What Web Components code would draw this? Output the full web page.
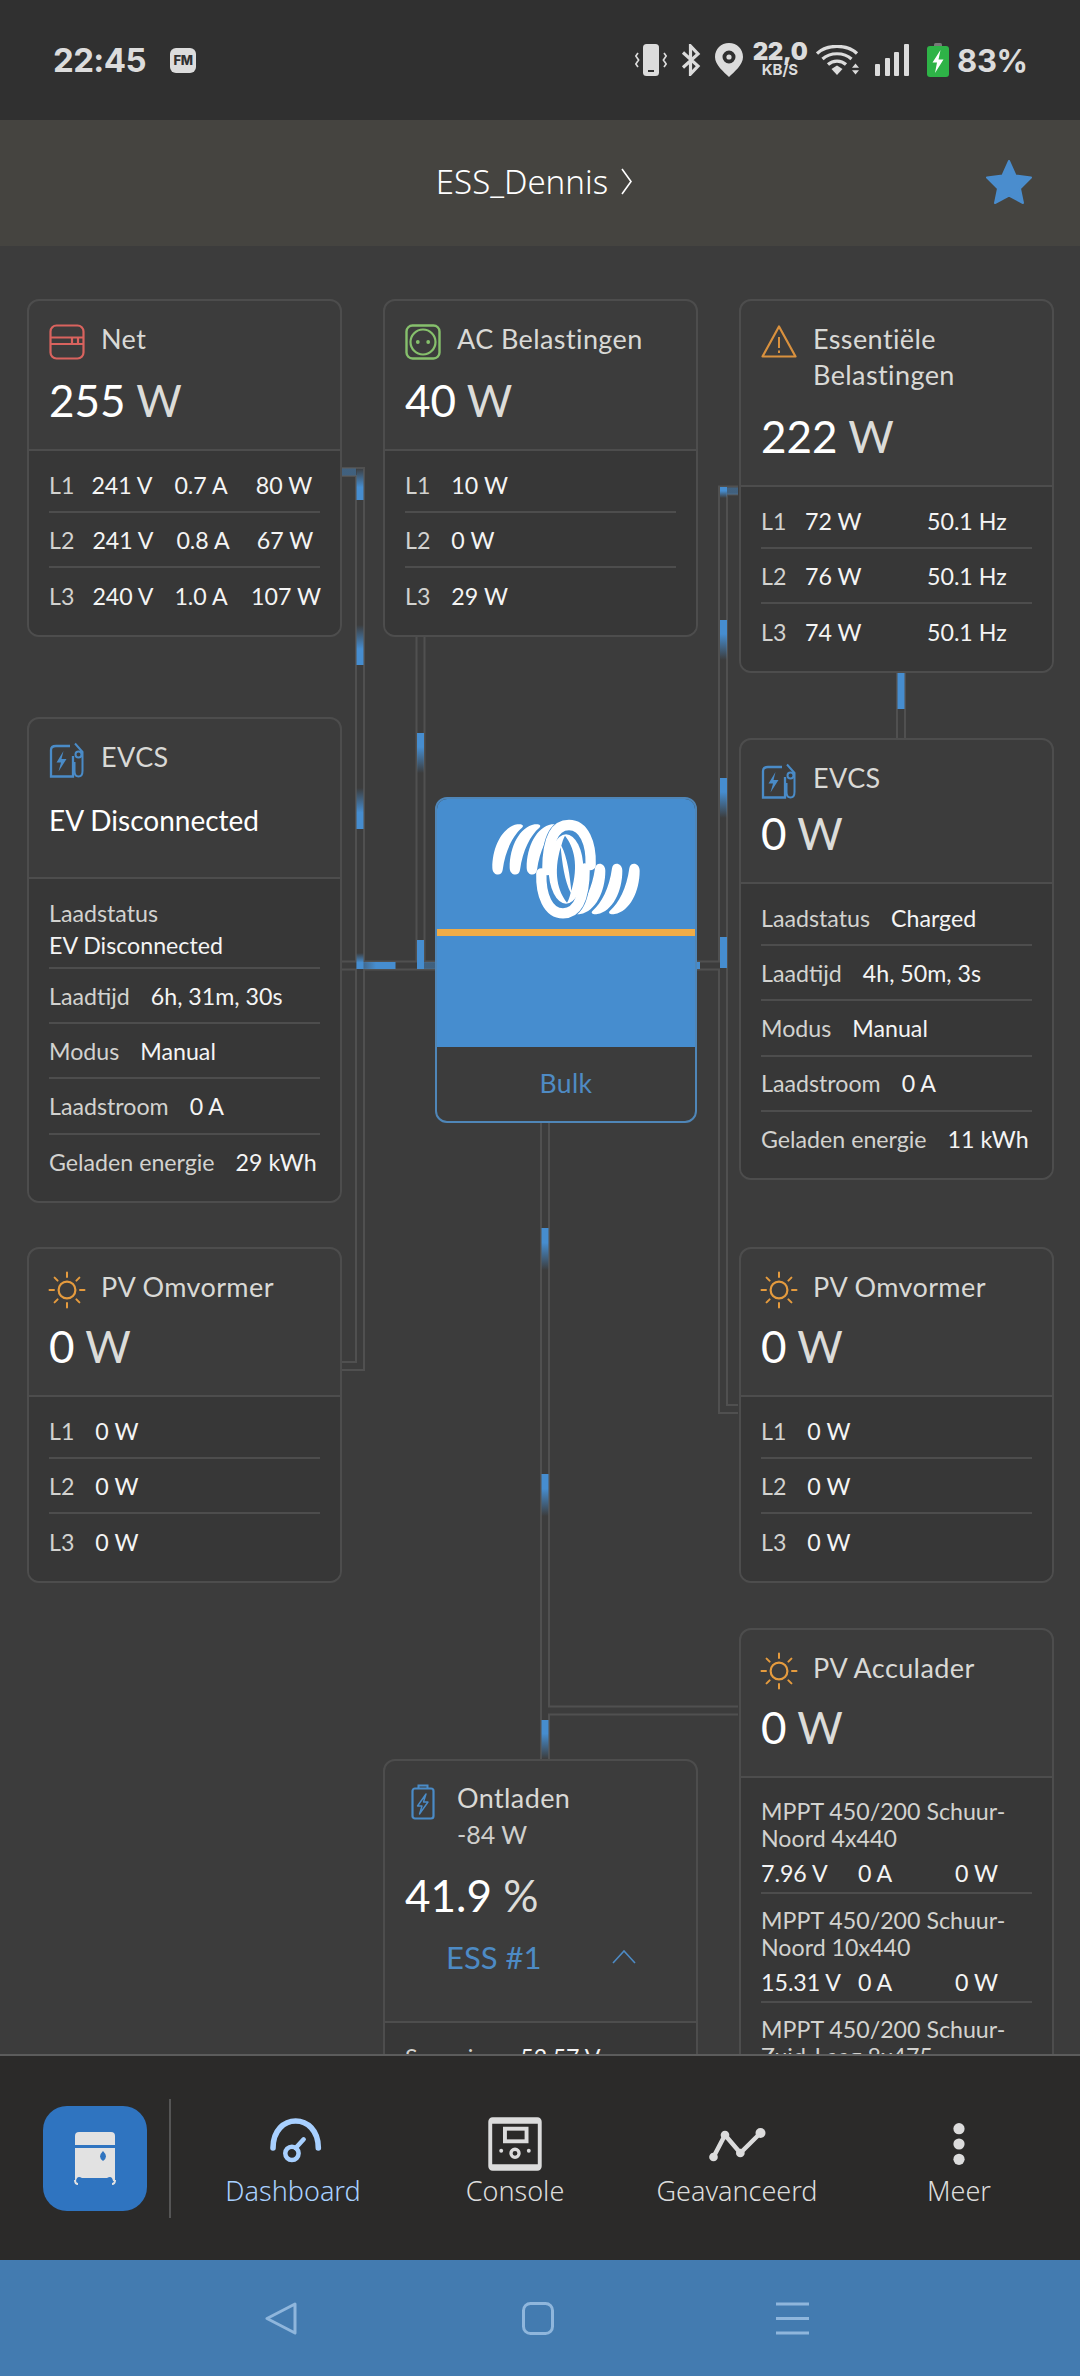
<!DOCTYPE html>
<html lang="nl">
<head>
<meta charset="utf-8">
<title>VRM Dashboard</title>
<style>
  html, body { margin: 0; padding: 0; background: #3c3c3c; }
  body { width: 1080px; height: 2376px; overflow: hidden; font-family: Lato, "Noto Sans", sans-serif; }
  vrm-app { display: flex; }
</style>
</head>
<body>
<vrm-app>
  <status-bar slot="status"></status-bar>
  <site-header slot="header" name="ESS_Dennis"></site-header>

  <flow-diagram slot="main">
    <device-card style="--x:27px;--y:299px;--gap:12px" value="255" unit="W">
      <vic-icon slot="icon" name="grid" color="#d9635e"></vic-icon>
      <span slot="title">Net</span>
      <card-row label="L1" style="--cols:38px 70px 88px 78px"><span>241 V</span><span>0.7 A</span><span>80 W</span></card-row>
      <card-row label="L2" style="--cols:38px 72px 88px 76px"><span>241 V</span><span>0.8 A</span><span>67 W</span></card-row>
      <card-row label="L3" style="--cols:38px 72px 84px 86px"><span>240 V</span><span>1.0 A</span><span>107 W</span></card-row>
    </device-card>

    <device-card style="--x:383px;--y:299px;--gap:12px" value="40" unit="W">
      <vic-icon slot="icon" name="socket" color="#86c06c"></vic-icon>
      <span slot="title">AC Belastingen</span>
      <card-row label="L1"><span>10 W</span></card-row>
      <card-row label="L2"><span>0 W</span></card-row>
      <card-row label="L3"><span>29 W</span></card-row>
    </device-card>

    <device-card style="--x:739px;--y:299px;--gap:12px" value="222" unit="W">
      <vic-icon slot="icon" name="warning" color="#d9913e"></vic-icon>
      <span slot="title">Essentiële<br>Belastingen</span>
      <card-row label="L1" style="--cols:44px 122px 1fr;--ji:start"><span>72 W</span><span>50.1 Hz</span></card-row>
      <card-row label="L2" style="--cols:44px 122px 1fr;--ji:start"><span>76 W</span><span>50.1 Hz</span></card-row>
      <card-row label="L3" style="--cols:44px 122px 1fr;--ji:start"><span>74 W</span><span>50.1 Hz</span></card-row>
    </device-card>

    <device-card style="--x:27px;--y:717px;--gap:24px" text="EV Disconnected">
      <vic-icon slot="icon" name="evcs" color="#4a8bc7"></vic-icon>
      <span slot="title">EVCS</span>
      <card-row stacked label="Laadstatus"><span>EV Disconnected</span></card-row>
      <card-row label="Laadtijd"><span>6h, 31m, 30s</span></card-row>
      <card-row label="Modus"><span>Manual</span></card-row>
      <card-row label="Laadstroom"><span>0 A</span></card-row>
      <card-row label="Geladen energie"><span>29 kWh</span></card-row>
    </device-card>

    <device-card style="--x:739px;--y:738px;--gap:6px" value="0" unit="W">
      <vic-icon slot="icon" name="evcs" color="#4a8bc7"></vic-icon>
      <span slot="title">EVCS</span>
      <card-row label="Laadstatus"><span>Charged</span></card-row>
      <card-row label="Laadtijd"><span>4h, 50m, 3s</span></card-row>
      <card-row label="Modus"><span>Manual</span></card-row>
      <card-row label="Laadstroom"><span>0 A</span></card-row>
      <card-row label="Geladen energie"><span>11 kWh</span></card-row>
    </device-card>

    <device-card style="--x:27px;--y:1247px;--gap:10px" value="0" unit="W">
      <vic-icon slot="icon" name="sun" color="#e59b3e"></vic-icon>
      <span slot="title">PV Omvormer</span>
      <card-row label="L1"><span>0 W</span></card-row>
      <card-row label="L2"><span>0 W</span></card-row>
      <card-row label="L3"><span>0 W</span></card-row>
    </device-card>

    <device-card style="--x:739px;--y:1247px;--gap:10px" value="0" unit="W">
      <vic-icon slot="icon" name="sun" color="#e59b3e"></vic-icon>
      <span slot="title">PV Omvormer</span>
      <card-row label="L1"><span>0 W</span></card-row>
      <card-row label="L2"><span>0 W</span></card-row>
      <card-row label="L3"><span>0 W</span></card-row>
    </device-card>

    <device-card style="--x:739px;--y:1628px;--gap:10px" value="0" unit="W">
      <vic-icon slot="icon" name="sun" color="#e59b3e"></vic-icon>
      <span slot="title">PV Acculader</span>
      <mppt-row name="MPPT 450/200 Schuur-Noord 4x440" volts="7.96 V" amps="0 A" watts="0 W"></mppt-row>
      <mppt-row name="MPPT 450/200 Schuur-Noord 10x440" volts="15.31 V" amps="0 A" watts="0 W"></mppt-row>
      <mppt-row name="MPPT 450/200 Schuur-Zuid-Laag 8x475" volts="21.06 V" amps="0 A" watts="0 W"></mppt-row>
    </device-card>

    <battery-card style="--x:383px;--y:1759px"></battery-card>

    <inverter-card state="Bulk"></inverter-card>
  </flow-diagram>

  <bottom-nav slot="nav">
    <nav-item label="Dashboard" active><vic-icon name="gauge" size="48" color="#a8d0ff"></vic-icon></nav-item>
    <nav-item label="Console"><vic-icon name="console" size="54" color="#dcdcdc"></vic-icon></nav-item>
    <nav-item label="Geavanceerd"><vic-icon name="chart" size="60" color="#dcdcdc"></vic-icon></nav-item>
    <nav-item label="Meer"><vic-icon name="dots" size="48" color="#dcdcdc"></vic-icon></nav-item>
  </bottom-nav>

  <android-bar slot="android"></android-bar>
</vrm-app>

<script>
// Icons used in the cards and the bottom navigation, all drawn on a 36x36 box
const ICONS = {
  grid: `<rect x="1.5" y="1.5" width="33" height="33" rx="6" fill="none" stroke="currentColor" stroke-width="2.2"/>
         <path d="M1.5 13.5H34.5M1.5 20H34.5M23 13.5V20M29 13.5V20" fill="none" stroke="currentColor" stroke-width="2.2"/>`,
  socket: `<rect x="1.5" y="1.5" width="33" height="33" rx="6" fill="none" stroke="currentColor" stroke-width="2.4"/>
           <circle cx="18" cy="18" r="12.5" fill="none" stroke="currentColor" stroke-width="2.2"/>
           <circle cx="12.8" cy="18" r="1.9" fill="currentColor"/><circle cx="23.2" cy="18" r="1.9" fill="currentColor"/>`,
  warning: `<path d="M18 2.5 34.5 32.5H1.5Z" fill="none" stroke="currentColor" stroke-width="2.2" stroke-linejoin="round"/>
            <path d="M18 13V24M18 26.5V29" fill="none" stroke="currentColor" stroke-width="2"/>`,
  evcs: `<path d="M21 4H7Q2 4 2 8V34.5H24V14" fill="none" stroke="currentColor" stroke-width="2.3"/>
         <path d="M14.5 9 7.5 20.5H12L9.5 29.5 17.5 17H12.5Z" fill="currentColor"/>
         <path d="M26 1.5 33.5 10V29Q33.5 34.5 29.5 34.5T25.5 29V20" fill="none" stroke="currentColor" stroke-width="2"/>
         <circle cx="29.5" cy="12.5" r="3" fill="none" stroke="currentColor" stroke-width="2"/>`,
  sun: `<circle cx="18" cy="18" r="8.4" fill="none" stroke="currentColor" stroke-width="2.2"/>
        <path d="M18 0.5V5M18 31V35.5M0.5 18H5M31 18H35.5M5.6 5.6 8.6 8.6M27.4 27.4 30.4 30.4M30.4 5.6 27.4 8.6M8.6 27.4 5.6 30.4" fill="none" stroke="currentColor" stroke-width="2" stroke-linecap="round"/>`,
  battery: `<rect x="7.5" y="4.5" width="21" height="30" rx="2.5" fill="none" stroke="currentColor" stroke-width="2.2"/>
            <path d="M13.5 4.5V1.5H22.5V4.5" fill="none" stroke="currentColor" stroke-width="2"/>
            <path d="M21 10 12.5 22H17L14.5 30 23 18H18.5Z" fill="none" stroke="currentColor" stroke-width="1.4" stroke-linejoin="round"/>`,
  gauge: `<path d="M3 21C3 -6 37 -6 37 21" fill="none" stroke="currentColor" stroke-width="4.2" stroke-linecap="round"/>
          <circle cx="17.2" cy="25" r="5" fill="none" stroke="currentColor" stroke-width="3.4"/>
          <path d="M20 21 26 14.5" fill="none" stroke="currentColor" stroke-width="3.4" stroke-linecap="round"/>`,
  console: `<rect x="1.5" y="1.5" width="33" height="33" rx="1.6" fill="none" stroke="currentColor" stroke-width="2.6"/>
            <path d="M2 3H34M2 33H34" stroke="currentColor" stroke-width="3"/>
            <rect x="11.3" y="7.8" width="14.4" height="8.4" fill="none" stroke="currentColor" stroke-width="2.6"/>
            <circle cx="18" cy="24.2" r="2.7" fill="none" stroke="currentColor" stroke-width="2.2"/>
            <circle cx="8.8" cy="22.5" r="1.3" fill="currentColor"/><circle cx="27.2" cy="22.5" r="1.3" fill="currentColor"/>`,
  chart: `<path d="M3.9 25.8 10.8 12.6 20 23.4 32.1 11.4" fill="none" stroke="currentColor" stroke-width="2.7"/>
          <circle cx="3.9" cy="25.8" r="2.6" fill="currentColor"/><circle cx="10.8" cy="12.6" r="2.6" fill="currentColor"/>
          <circle cx="20" cy="23.4" r="2.6" fill="currentColor"/><circle cx="32.1" cy="11.4" r="3" fill="currentColor"/>`,
  dots: `<circle cx="18" cy="6.5" r="4.2" fill="currentColor"/><circle cx="18" cy="18" r="4.2" fill="currentColor"/><circle cx="18" cy="29.5" r="4.2" fill="currentColor"/>`
};

class VicIcon extends HTMLElement {
  constructor() {
    super();
    this.attachShadow({ mode: 'open' });
    const size = this.getAttribute('size') || 36;
    this.shadowRoot.innerHTML = `
      <style>
        :host { display: block; width: ${size}px; height: ${size}px; flex: none; color: ${this.getAttribute('color') || 'currentColor'}; }
        svg { display: block; width: 100%; height: 100%; overflow: visible; }
      </style>
      <svg viewBox="0 0 36 36">${ICONS[this.getAttribute('name')] || ''}</svg>`;
  }
}
customElements.define('vic-icon', VicIcon);

// Top status bar of the phone
class StatusBar extends HTMLElement {
  constructor() {
    super();
    this.attachShadow({ mode: 'open' });
    this.shadowRoot.innerHTML = `
      <style>
        :host { display: flex; align-items: center; height: 120px; box-sizing: border-box; padding: 0 56px 0 53px; background: #303030; color: #dcdcdc; font-family: Inter, Roboto, sans-serif; }
        .time { font-size: 33px; font-weight: 700; letter-spacing: -.6px; }
        .fm { display: flex; align-items: center; justify-content: center; width: 26px; height: 25px; margin-left: 24px; border-radius: 6px; background: #dcdcdc; color: #303030; font-size: 13px; font-weight: 800; letter-spacing: -.5px; }
        .right { display: flex; align-items: center; margin-left: auto; }
        svg { display: block; flex: none; }
        .speed { display: flex; flex-direction: column; align-items: center; width: 52px; margin: -3px 10px 0 11px; font-weight: 700; line-height: 1; }
        .speed b { font-size: 24px; height: 20px; line-height: 20px; letter-spacing: -.4px; }
        .speed i { font-size: 15px; font-style: normal; line-height: 13px; margin-top: 1px; }
        .pct { width: 67px; margin-left: 8px; font-size: 31px; font-weight: 700; letter-spacing: -.3px; white-space: nowrap; }
      </style>
      <span class="time">22:45</span>
      <span class="fm">FM</span>
      <div class="right">
        <svg width="32" height="32" viewBox="0 0 32 32" style="margin-right:14px">
          <rect x="8" y="0" width="16" height="32" rx="3.5" fill="currentColor"/>
          <rect x="13" y="26" width="6" height="2" fill="#303030"/>
          <path d="M3 9 .8 12 3.6 16 .8 20 3 23M29 9 31.2 12 28.4 16 31.2 20 29 23" fill="none" stroke="currentColor" stroke-width="1.7"/>
        </svg>
        <svg width="20" height="32" viewBox="0 0 20 32" style="margin-right:14px">
          <path d="M2 8.5 17 22 9.5 30V2L17 10 2 23.5" fill="none" stroke="currentColor" stroke-width="3.2"/>
        </svg>
        <svg width="28" height="34" viewBox="0 0 28 34">
          <path fill-rule="evenodd" fill="currentColor" d="M14 0C6 0 0 6 0 14 0 22 9 29 14 34 19 29 28 22 28 14 28 6 22 0 14 0ZM14 7.5A6.5 6.5 0 1 1 14 20.5 6.5 6.5 0 1 1 14 7.5Z"/>
          <circle cx="14" cy="14" r="2.6" fill="currentColor"/>
        </svg>
        <div class="speed"><b>22,0</b><i>KB/S</i></div>
        <svg width="44" height="30" viewBox="0 0 44 30" style="margin-right:15px">
          <path d="M1 8.5C11 -1 31 -1 41 8.5M6.5 14C14 7 28 7 35.5 14M12 19.5C17 15 25 15 30 19.5" fill="none" stroke="currentColor" stroke-width="3.2"/>
          <path d="M15.5 24 21 20.5 26.5 24 21 30Z" fill="currentColor"/>
          <path d="M36 22.8 39.5 18.5 43 22.8ZM36 25.2H43L39.5 29.5Z" fill="currentColor"/>
        </svg>
        <svg width="34" height="32" viewBox="0 0 34 32" style="margin-right:18px">
          <rect x="0" y="20" width="5" height="12" rx="1" fill="currentColor"/>
          <rect x="10" y="14" width="5" height="18" rx="1" fill="currentColor"/>
          <rect x="19" y="8" width="5" height="24" rx="1" fill="currentColor"/>
          <rect x="29" y="0" width="5" height="32" rx="1" fill="currentColor"/>
        </svg>
        <svg width="22" height="34" viewBox="0 0 22 34">
          <path d="M7 3V1.5Q7 0 8.5 0H13.5Q15 0 15 1.5V3Z" fill="#787878"/>
          <rect x="0" y="3" width="22" height="31" rx="3" fill="#2eb347"/>
          <path d="M13.5 7 5.5 19.5H10L8 30 16.5 16.5H11.5Z" fill="#fff"/>
        </svg>
        <span class="pct">83%</span>
      </div>`;
  }
}
customElements.define('status-bar', StatusBar);

class SiteHeader extends HTMLElement {
  constructor() {
    super();
    this.attachShadow({ mode: 'open' });
    this.shadowRoot.innerHTML = `
      <style>
        :host { display: flex; align-items: center; justify-content: center; position: relative; height: 126px; background: #454440; color: #fff; font-family: "Noto Sans", sans-serif; font-weight: 300; font-size: 33px; }
        .name { display: flex; align-items: center; gap: 13px; margin: -4px 0 0 -12px; }
        .star { position: absolute; right: 48px; top: 40px; width: 46px; height: 44px; }
      </style>
      <div class="name">
        <span>${this.getAttribute('name')}</span>
        <svg width="11" height="27" viewBox="0 0 11 27"><path d="M1 1 10 13.5 1 26" fill="none" stroke="#fff" stroke-width="1.6"/></svg>
      </div>
      <svg class="star" viewBox="0 0 46 44"><path d="M23 1 29.5 15.5 45 17.5 34 28.5 37 43 23 35.5 9 43 12 28.5 1 17.5 16.5 15.5Z" fill="#4a8dce" stroke="#4a8dce" stroke-width="2" stroke-linejoin="round"/></svg>`;
  }
}
customElements.define('site-header', SiteHeader);

// One line in a card body: a grey label followed by its values
class CardRow extends HTMLElement {
  constructor() {
    super();
    this.attachShadow({ mode: 'open' });
    this.shadowRoot.innerHTML = `
      <style>
        :host { display: flex; gap: 21px; align-items: center; box-sizing: border-box; height: 55.2px; border-bottom: 2px solid #4d4d4d; font-size: 23.2px; color: #f4f4f4; white-space: nowrap; }
        :host(:last-child) { border-bottom: 0; }
        :host([style*="--cols"]) { display: grid; grid-template-columns: var(--cols); gap: 0; justify-items: var(--ji, center); }
        :host([stacked]) { display: block; height: 83px; padding-top: 11px; line-height: 32px; }
        .k { color: #d2d2cf; justify-self: start; }
        :host([stacked]) .k { display: block; }
      </style>
      <span class="k">${this.getAttribute('label')}</span><slot></slot>`;
  }
}
customElements.define('card-row', CardRow);

class MpptRow extends HTMLElement {
  constructor() {
    super();
    this.attachShadow({ mode: 'open' });
    this.shadowRoot.innerHTML = `
      <style>
        :host { display: block; box-sizing: border-box; height: 109px; padding-top: 13px; border-bottom: 2px solid #4d4d4d; font-size: 23.2px; color: #d2d2cf; }
        :host(:last-child) { border-bottom: 0; }
        .name { line-height: 27px; }
        .vals { display: grid; grid-template-columns: 97px 97px 1fr; margin-top: 5px; line-height: 32px; color: #f4f4f4; }
      </style>
      <div class="name">${this.getAttribute('name')}</div>
      <div class="vals"><span>${this.getAttribute('volts')}</span><span>${this.getAttribute('amps')}</span><span>${this.getAttribute('watts')}</span></div>`;
  }
}
customElements.define('mppt-row', MpptRow);

const CARD_STYLE = `
  :host { display: flex; flex-direction: column; position: absolute; left: var(--x); top: calc(var(--y) - 246px); width: 315px; box-sizing: border-box; border: 2.5px solid #4d4d4d; border-radius: 12px; background: #3c3c3c; overflow: hidden; }
  .head { padding: 23px 20px 0; border-bottom: 2.5px solid #4d4d4d; }
  .title { display: flex; gap: 16px; font-size: 27px; line-height: 36px; letter-spacing: .4px; color: #d9d9d6; }
  .title > div { margin: -3px 0 3px; }
  .value { font-size: 44px; line-height: 56px; color: #fff; }
  .value small { font-size: inherit; color: #dcdcd9; }
  .body { padding: 7px 20px 11px; background: #373737; }
`;

class DeviceCard extends HTMLElement {
  constructor() {
    super();
    this.attachShadow({ mode: 'open' });
    const text = this.getAttribute('text');
    const value = text
      ? `<div class="text">${text}</div>`
      : `<div class="value">${this.getAttribute('value')} <small>${this.getAttribute('unit')}</small></div>`;
    this.shadowRoot.innerHTML = `
      <style>
        ${CARD_STYLE}
        .value { margin-top: var(--gap); padding-bottom: 21px; }
        .text { margin-top: var(--gap); padding-bottom: 39px; font-size: 28px; line-height: 36px; color: #fff; }
      </style>
      <div class="head">
        <div class="title"><slot name="icon"></slot><div><slot name="title"></slot></div></div>
        ${value}
      </div>
      <div class="body"><slot></slot></div>`;
  }
}
customElements.define('device-card', DeviceCard);

class BatteryCard extends HTMLElement {
  constructor() {
    super();
    this.attachShadow({ mode: 'open' });
    this.shadowRoot.innerHTML = `
      <style>
        ${CARD_STYLE}
        .title { gap: 0; }
        .title > div { margin: -4px 0 4px; }
        .ico { margin: 0 16px 0 0; }
        .sub { font-size: 25px; line-height: 36px; letter-spacing: 0; color: #cfcfcc; }
        .value { margin-top: 11px; }
        .pack { display: flex; align-items: center; height: 48px; margin: 10px 0 0 41px; font-size: 31px; color: #4d8bc5; }
        .pack svg { margin-left: 71px; }
        .head { height: 236.5px; box-sizing: content-box; }
        .row { display: flex; gap: 22px; height: 54px; font-size: 23.2px; line-height: 54px; white-space: nowrap; color: #d2d2cf; }
        .row b { font-weight: 400; color: #f4f4f4; }
      </style>
      <div class="head">
        <div class="title">
          <vic-icon class="ico" name="battery" color="#4a8bc7"></vic-icon>
          <div>Ontladen<div class="sub">-84 W</div></div>
        </div>
        <div class="value">41.9 <small>%</small></div>
        <div class="pack">ESS #1
          <svg width="24" height="14" viewBox="0 0 24 14"><path d="M1 13 12 1 23 13" fill="none" stroke="#4d8bc5" stroke-width="1.6"/></svg>
        </div>
      </div>
      <div class="body"><div class="row">Spanning <b>52.57 V</b></div></div>`;
  }
}
customElements.define('battery-card', BatteryCard);

// Half of the Victron coil, the other half is the same shape turned by 180 degrees
const COIL_ARC = 'M25 158C25 95 55 36 100 28 112 26 122 30 114 38 88 60 64 105 56 165 53 186 25 182 25 158Z';
const COIL_RING = 'M190 165C190 70 215 30 255 30 300 30 322 85 320 150';
const COIL_LENS = 'M243 62C270 95 285 150 262 228 258 185 250 125 232 92 235 80 238 70 243 62Z';
const TURN = 'rotate(180 246 162.5)';

class InverterCard extends HTMLElement {
  constructor() {
    super();
    this.attachShadow({ mode: 'open' });
    const arcs = [0, 52, 103].map(dx => `<path d="${COIL_ARC}" transform="translate(${dx} 0)"/>`).join('');
    this.shadowRoot.innerHTML = `
      <style>
        :host { display: flex; flex-direction: column; position: absolute; left: 435px; top: 551px; width: 262px; height: 326px; box-sizing: border-box; border-radius: 12px; background: #3c3c3c; border: 2px solid #4f86b8; overflow: hidden; }
        .blue { margin: -2px -2px 0; height: 250px; background: #468dcf; display: flex; flex-direction: column; }
        .logo { height: 132px; box-sizing: border-box; padding-top: 14px; display: flex; align-items: center; justify-content: center; }
        .bar { height: 7px; background: #f0ac47; }
        .state { flex: 1; display: flex; align-items: center; justify-content: center; padding-bottom: 2px; font-size: 26.5px; letter-spacing: .4px; color: #4f8bc4; }
      </style>
      <div class="blue">
        <div class="logo">
          <svg width="165" height="110" viewBox="0 0 495 330">
            <g fill="#fff"><g>${arcs}</g><g transform="${TURN}">${arcs}</g></g>
            <g fill="none" stroke="#468dcf" stroke-width="35">
              <path d="${COIL_RING}"/><path d="${COIL_RING}" transform="${TURN}"/>
            </g>
            <ellipse cx="246" cy="162" rx="52" ry="104" fill="#fff"/>
            <g fill="none" stroke="#fff" stroke-width="31" stroke-linecap="round">
              <path d="${COIL_RING}"/><path d="${COIL_RING}" transform="${TURN}"/>
            </g>
            <g fill="#468dcf">
              <path d="${COIL_LENS}"/><path d="${COIL_LENS}" transform="${TURN}"/>
            </g>
          </svg>
        </div>
        <div class="bar"></div>
      </div>
      <div class="state">${this.getAttribute('state')}</div>`;
  }
}
customElements.define('inverter-card', InverterCard);

// Free canvas of the system overview: wires under the absolutely placed device cards
class FlowDiagram extends HTMLElement {
  constructor() {
    super();
    this.attachShadow({ mode: 'open' });
    const wires = 'M341 472H360V1366H341 M341 965.5H435 M420.5 637V965 M738 490.5H723V1409H738 M697 965.5H723 M901 673V738 M545 1123V1759 M545 1710.5H738';
    // x, y, width, height, gradient
    const pulses = [
      [356.5, 468, 7, 32, 'in'], [356.5, 625, 7, 40, 'in'], [356.5, 788, 7, 41, 'in'], [356.5, 953, 7, 16, 'in'],
      [341, 468.5, 15, 7, 'dimH'], [356.5, 962, 39, 7, 'inH'],
      [417, 733, 7, 40, 'out'], [417, 940, 7, 29, 'solid'], [424, 962, 11, 7, 'dimH'],
      [720, 487, 7, 11, 'out'], [727, 487.5, 11, 7, 'dimH'], [720, 620, 7, 40, 'out'], [720, 778, 7, 40, 'out'], [720, 937, 7, 31, 'solid'],
      [697, 962, 3, 7, 'solid'], [897.5, 673, 7, 36, 'solid'],
      [541.5, 1228, 7, 42, 'out'], [541.5, 1474, 7, 42, 'out'], [541.5, 1720, 7, 39, 'out']
    ];
    this.shadowRoot.innerHTML = `
      <style>
        :host { display: block; position: relative; height: 1808px; background: #3c3c3c; overflow: hidden; }
        svg { position: absolute; left: 0; top: 0; }
      </style>
      <svg width="1080" height="1808" viewBox="0 246 1080 1808">
        <defs>
          <linearGradient id="in" x2="0" y2="1"><stop offset="0" stop-color="#468dcf" stop-opacity="0"/><stop offset=".6" stop-color="#468dcf"/></linearGradient>
          <linearGradient id="out" x2="0" y2="1"><stop offset=".35" stop-color="#468dcf"/><stop offset="1" stop-color="#468dcf" stop-opacity="0"/></linearGradient>
          <linearGradient id="inH"><stop offset="0" stop-color="#468dcf" stop-opacity=".3"/><stop offset=".5" stop-color="#468dcf"/></linearGradient>
          <linearGradient id="dimH"><stop offset="0" stop-color="#468dcf" stop-opacity=".45"/><stop offset="1" stop-color="#468dcf" stop-opacity=".45"/></linearGradient>
          <linearGradient id="solid"><stop offset="0" stop-color="#468dcf"/></linearGradient>
        </defs>
        <path d="${wires}" fill="none" stroke="#505050" stroke-width="10"/>
        <path d="${wires}" fill="none" stroke="#3c3c3c" stroke-width="6"/>
        ${pulses.map(([x, y, w, h, g]) => `<rect x="${x}" y="${y}" width="${w}" height="${h}" fill="url(#${g})"/>`).join('')}
      </svg>
      <slot></slot>`;
  }
}
customElements.define('flow-diagram', FlowDiagram);

class NavItem extends HTMLElement {
  constructor() {
    super();
    this.attachShadow({ mode: 'open' });
    this.shadowRoot.innerHTML = `
      <style>
        :host { display: flex; flex-direction: column; align-items: center; width: 222px; color: #dcdcdc; }
        :host([active]) { color: #a8d0ff; }
        .ico { display: flex; align-items: center; justify-content: center; height: 60px; margin-top: 7px; }
        .label { margin-top: -1px; font-size: 27px; line-height: 36px; }
      </style>
      <div class="ico"><slot></slot></div>
      <div class="label">${this.getAttribute('label')}</div>`;
  }
}
customElements.define('nav-item', NavItem);

class BottomNav extends HTMLElement {
  constructor() {
    super();
    this.attachShadow({ mode: 'open' });
    this.shadowRoot.innerHTML = `
      <style>
        :host { display: flex; align-items: center; height: 206px; box-sizing: border-box; padding-left: 43px; border-top: 2px solid #5c5c5c; background: #2b2a29; font-family: "Noto Sans", sans-serif; font-weight: 300; }
        .app { display: flex; align-items: center; justify-content: center; width: 104px; height: 105px; border-radius: 24px; background: #2f74c0; }
        .sep { width: 2px; height: 119px; margin: 0 11px 0 22px; background: #555; }
      </style>
      <div class="app">
        <svg width="42" height="54" viewBox="0 0 42 54">
          <path d="M1 14V5Q1 1 5 1H37Q41 1 41 5V14Z" fill="#e2e2e2"/>
          <path d="M1 17H41V50H39Q38 44 33 47H8Q3 44 2 50H1Z" fill="#e2e2e2"/>
          <path d="M1 49Q1 53 4 53M41 49Q41 53 38 53" fill="none" stroke="#e2e2e2" stroke-width="2"/>
          <path d="M29 20Q32 23 32 25.5 32 28 29 30 26 28 26 25.5 26 23 29 20Z" fill="#2f74c0"/>
        </svg>
      </div>
      <div class="sep"></div>
      <slot></slot>`;
  }
}
customElements.define('bottom-nav', BottomNav);

class AndroidBar extends HTMLElement {
  constructor() {
    super();
    this.attachShadow({ mode: 'open' });
    this.shadowRoot.innerHTML = `
      <style>
        :host { display: flex; align-items: center; height: 116px; background: #437bb0; }
        svg { display: block; flex: none; }
      </style>
      <svg width="32" height="33" viewBox="0 0 32 33" style="margin-left:265px"><path d="M30 2 2 16.5 30 31Z" fill="none" stroke="#8fb6dc" stroke-width="3" stroke-linejoin="round"/></svg>
      <svg width="32" height="33" viewBox="0 0 32 33" style="margin-left:225px"><rect x="1.5" y="1.5" width="29" height="30" rx="7" fill="none" stroke="#8fb6dc" stroke-width="3"/></svg>
      <svg width="33" height="33" viewBox="0 0 33 33" style="margin-left:222px"><path d="M0 2H33M0 16.5H33M0 31H33" fill="none" stroke="#8fb6dc" stroke-width="3"/></svg>`;
  }
}
customElements.define('android-bar', AndroidBar);

class VrmApp extends HTMLElement {
  constructor() {
    super();
    this.attachShadow({ mode: 'open' });
    this.shadowRoot.innerHTML = `
      <style>
        :host { display: flex; flex-direction: column; width: 1080px; height: 2376px; overflow: hidden; }
      </style>
      <slot name="status"></slot>
      <slot name="header"></slot>
      <slot name="main"></slot>
      <slot name="nav"></slot>
      <slot name="android"></slot>`;
  }
}
customElements.define('vrm-app', VrmApp);
</script>
</body>
</html>
